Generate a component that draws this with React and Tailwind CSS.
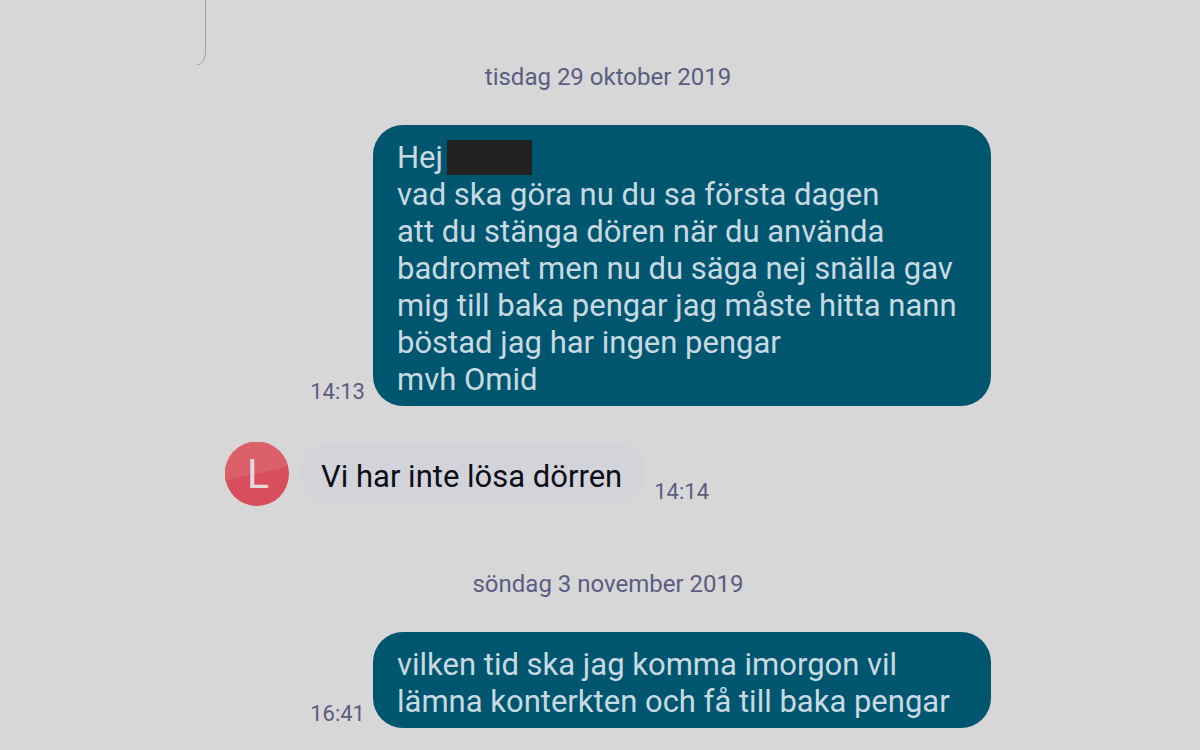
const THREAD = [
  {
    day: 'tisdag 29 oktober 2019',
    messages: [
      {
        id: 1,
        own: true,
        time: '14:13',
        greeting: 'Hej',
        lines: [
          'vad ska göra nu du sa första dagen',
          'att du stänga dören när du använda',
          'badromet men nu du säga nej snälla gav',
          'mig till baka pengar jag måste hitta nann',
          'böstad jag har ingen pengar',
          'mvh Omid',
        ],
      },
      { id: 2, own: false, time: '14:14', initial: 'L', lines: ['Vi har inte lösa dörren'] },
    ],
  },
  {
    day: 'söndag 3 november 2019',
    messages: [
      {
        id: 3,
        own: true,
        time: '16:41',
        lines: ['vilken tid ska jag komma imorgon vil', 'lämna konterkten och få till baka pengar'],
      },
    ],
  },
]

function Avatar({ initial }) {
  return (
    <svg viewBox="0 0 64 64" className="mr-3 size-16 shrink-0" role="img" aria-label={initial}>
      <circle cx="32" cy="32" r="32" fill="#d94e5d" />
      <path d="M0.6 39 C18 33 38 32 63 24 A32 32 0 0 0 0.6 39 Z" fill="#dc6069" />
      <text x="33" y="46" textAnchor="middle" fontSize="41" fill="#e6dadd">{initial}</text>
    </svg>
  )
}

function Time({ children }) {
  return <time className="text-[22px] leading-7 text-[#5a5d82]">{children}</time>
}

function OwnMessage({ message }) {
  return (
    <div className="flex items-end justify-end gap-2">
      <Time>{message.time}</Time>
      <div className="w-[618px] rounded-[30px] bg-[#00566f] px-6 pt-3.5 pb-2 text-[31px] leading-[37px] whitespace-nowrap text-[#c9d9e1]">
        {message.greeting && (
          <p className="flex items-center gap-1">
            {message.greeting}
            <span className="h-[35px] w-[85px] bg-[#222222]" />
          </p>
        )}
        {message.lines.map(line => <p key={line}>{line}</p>)}
      </div>
    </div>
  )
}

function ReceivedMessage({ message }) {
  return (
    <div className="mt-9 flex items-end gap-2">
      <div className="flex items-center">
        <Avatar initial={message.initial} />
        <div className="rounded-[30px] bg-[#d3d4d9] pt-3.5 pr-6 pb-2 pl-5 text-[31px] leading-10 whitespace-nowrap text-[#0c0e18]">
          {message.lines.map(line => <p key={line}>{line}</p>)}
        </div>
      </div>
      <Time>{message.time}</Time>
    </div>
  )
}

export default function App() {
  return (
    <main className="min-h-screen overflow-hidden bg-[#d7d7d7] pl-4 font-['Roboto',sans-serif]">
      <div className="mx-auto w-full max-w-[766px]">
        {/* corner of the frame that is scrolled out above the thread */}
        <svg viewBox="0 0 12 65" className="-ml-7 h-[65px] w-3" fill="none" stroke="#989fc0" aria-hidden="true">
          <path d="M8.5 0 V50 C8.5 59 6 64 0 65" />
        </svg>
        <div className="flex flex-col gap-[66px]">
          {THREAD.map(({ day, messages }) => (
            <section key={day}>
              <h2 className="mb-9 text-center text-2xl leading-6 text-[#5a5d82]">{day}</h2>
              {messages.map(m => m.own
                ? <OwnMessage key={m.id} message={m} />
                : <ReceivedMessage key={m.id} message={m} />)}
            </section>
          ))}
        </div>
      </div>
    </main>
  )
}
